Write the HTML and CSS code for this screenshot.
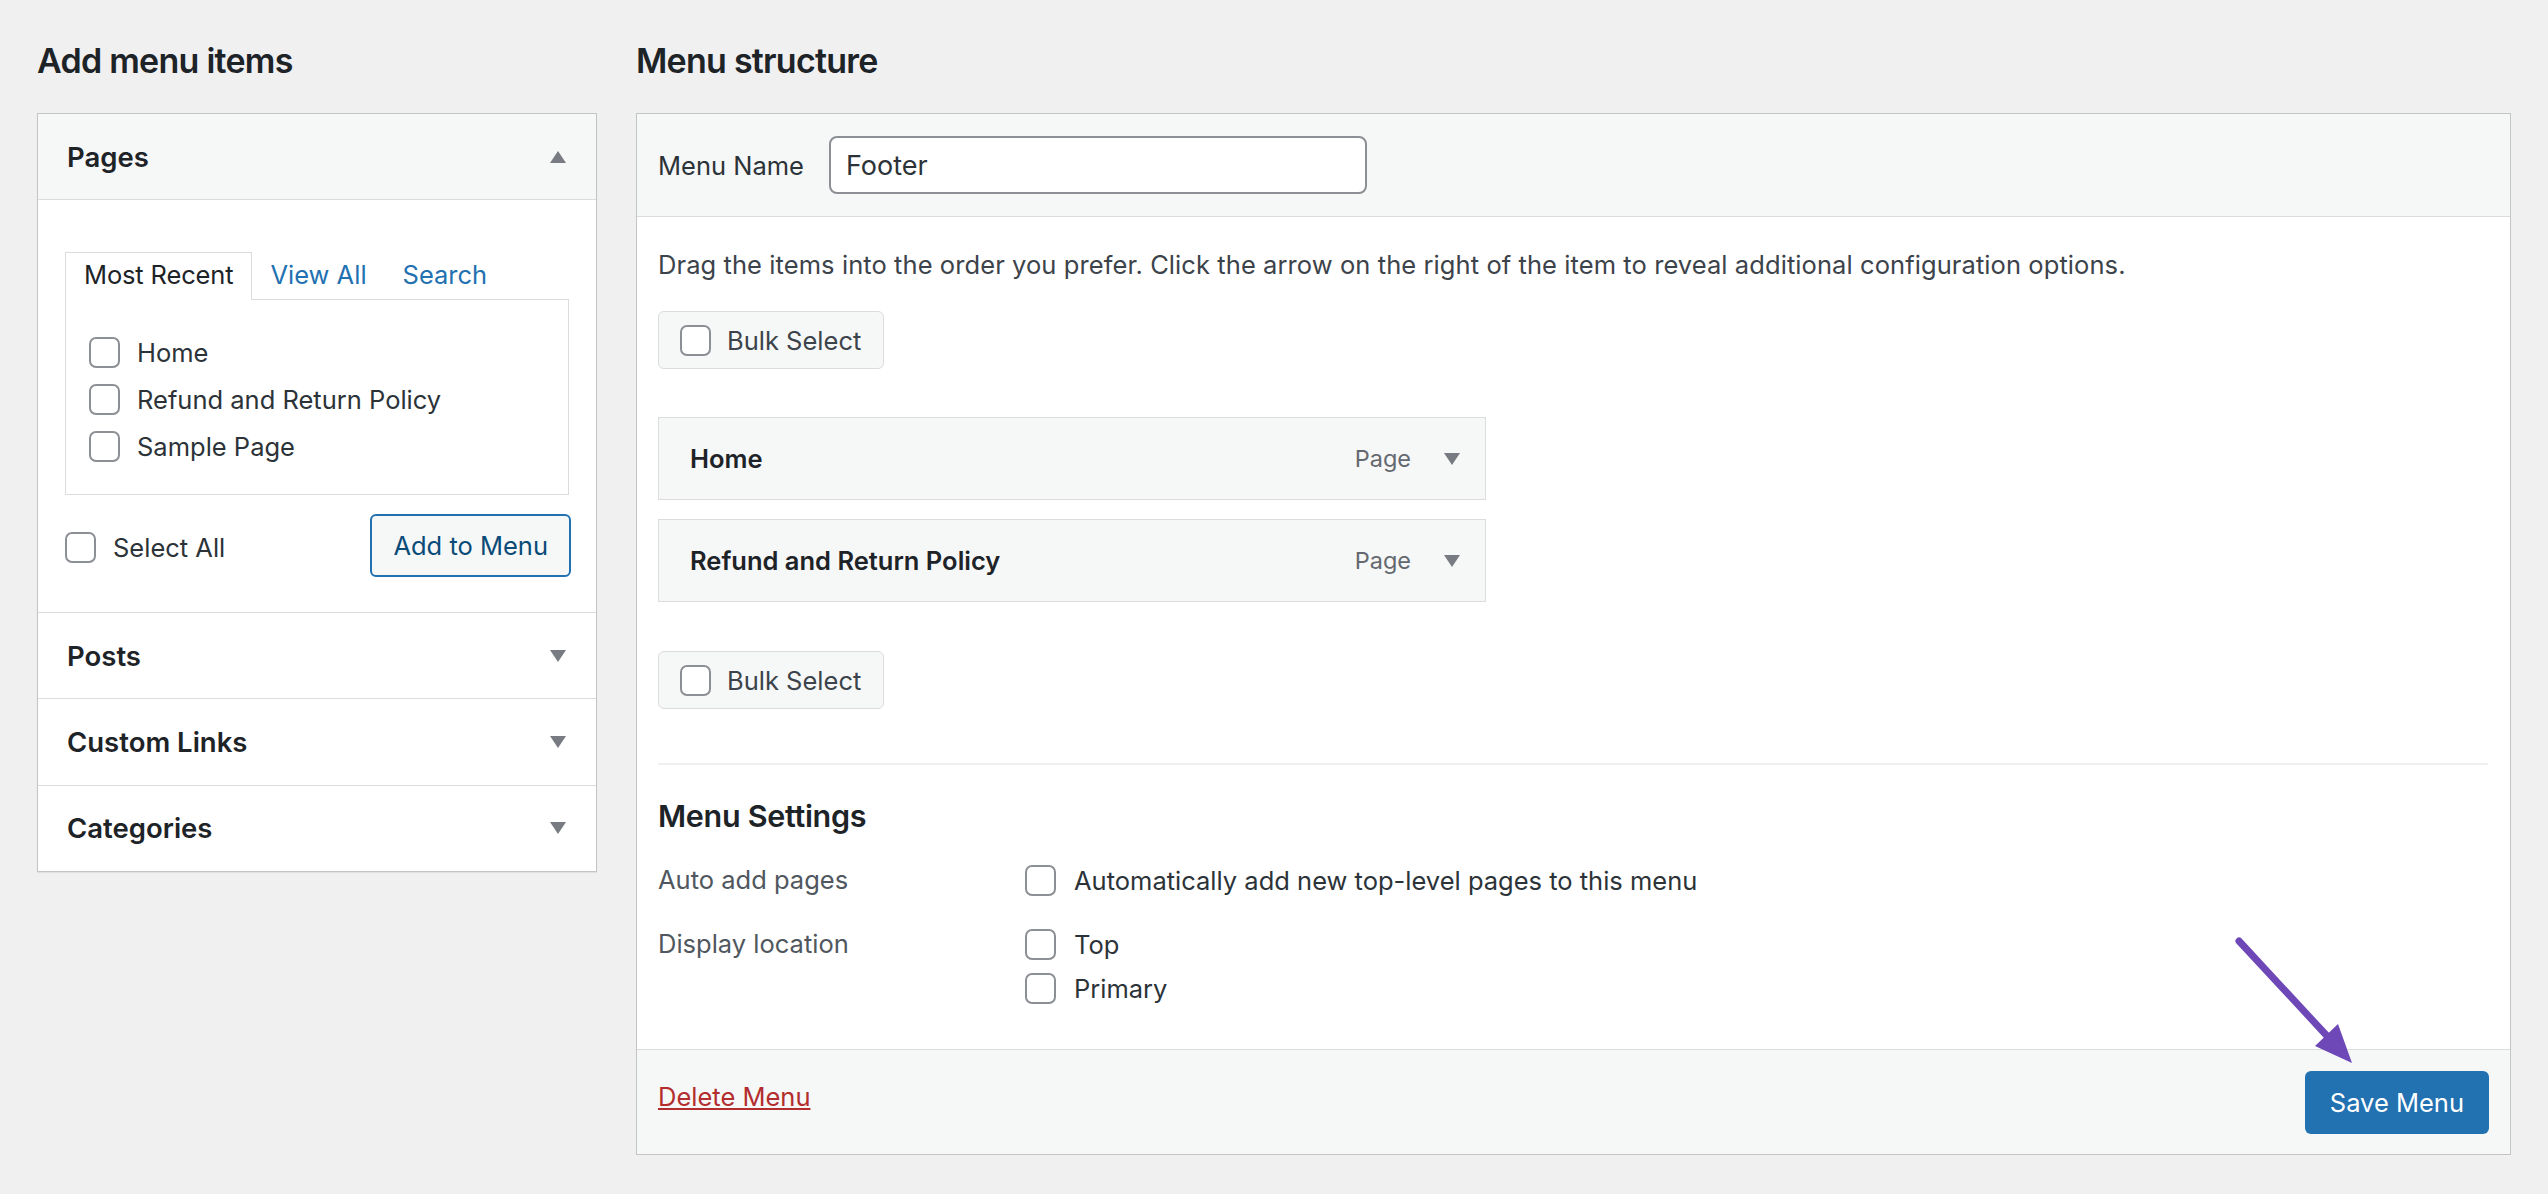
FILE: index.html
```html
<!DOCTYPE html>
<html>
<head>
<meta charset="utf-8">
<title>Menus</title>
<link rel="stylesheet" href="styles.css">
</head>
<body>
<div class="page">
  <div class="col-left">
    <h2 class="col-title">Add menu items</h2>
    <div class="accordion">
      <div class="acc-section open">
        <div class="acc-head"><h3>Pages</h3><span class="tri tri-up"></span></div>
        <div class="acc-content">
          <ul class="tabs">
            <li class="tab active">Most Recent</li>
            <li class="tab"><a class="tab-link">View All</a></li>
            <li class="tab"><a class="tab-link">Search</a></li>
          </ul>
          <div class="tab-panel">
            <label class="check-row"><span class="cb"></span>Home</label>
            <label class="check-row"><span class="cb"></span>Refund and Return Policy</label>
            <label class="check-row"><span class="cb"></span>Sample Page</label>
          </div>
          <div class="add-row">
            <label class="check-row select-all"><span class="cb"></span>Select All</label>
            <button class="btn-secondary">Add to Menu</button>
          </div>
        </div>
      </div>
      <div class="acc-section">
        <div class="acc-head"><h3>Posts</h3><span class="tri tri-down"></span></div>
      </div>
      <div class="acc-section">
        <div class="acc-head"><h3>Custom Links</h3><span class="tri tri-down"></span></div>
      </div>
      <div class="acc-section">
        <div class="acc-head"><h3>Categories</h3><span class="tri tri-down"></span></div>
      </div>
    </div>
  </div>

  <div class="col-right">
    <h2 class="col-title">Menu structure</h2>
    <div class="menu-box">
      <div class="menu-head">
        <label class="menu-name-label">Menu Name</label>
        <div class="text-input">Footer</div>
      </div>
      <div class="menu-body">
        <p class="instructions">Drag the items into the order you prefer. Click the arrow on the right of the item to reveal additional configuration options.</p>
        <div class="bulk-btn bulk-top"><span class="cb"></span>Bulk Select</div>
        <ul class="menu-items">
          <li class="menu-item">
            <span class="item-title">Home</span>
            <span class="item-controls"><span class="item-type">Page</span><span class="tri tri-down"></span></span>
          </li>
          <li class="menu-item">
            <span class="item-title">Refund and Return Policy</span>
            <span class="item-controls"><span class="item-type">Page</span><span class="tri tri-down"></span></span>
          </li>
        </ul>
        <div class="bulk-btn bulk-bottom"><span class="cb"></span>Bulk Select</div>
        <div class="divider"></div>
        <h3 class="settings-title">Menu Settings</h3>
        <div class="settings-row auto-row">
          <div class="settings-label">Auto add pages</div>
          <div class="settings-options">
            <label class="option"><span class="cb"></span>Automatically add new top-level pages to this menu</label>
          </div>
        </div>
        <div class="settings-row location-row">
          <div class="settings-label">Display location</div>
          <div class="settings-options">
            <label class="option"><span class="cb"></span>Top</label>
            <label class="option"><span class="cb"></span>Primary</label>
          </div>
        </div>
      </div>
      <div class="menu-foot">
        <a class="delete-link">Delete Menu</a>
        <button class="btn-primary">Save Menu</button>
      </div>
    </div>
  </div>
</div>

<svg class="annot" width="150" height="150" viewBox="0 0 150 150" xmlns="http://www.w3.org/2000/svg">
  <line x1="19" y1="16" x2="108" y2="112" stroke="#6f48b7" stroke-width="7" stroke-linecap="round"/>
  <polygon points="95,121 118,99 132,138" fill="#6f48b7"/>
</svg>
</body>
</html>
```

FILE: styles.css
```css
* { box-sizing: border-box; }

body {
  margin: 0;
  background: #f0f0f1;
  font-family: Inter, "Noto Sans", sans-serif;
  color: #1d2327;
  font-size: 25.5px;
  position: relative;
  min-height: 1194px;
}

.page {
  display: flex;
  gap: 39px;
  padding: 41px 37px 0 37px;
  align-items: flex-start;
}

.col-left { width: 560px; flex: none; }
.col-right { flex: 1; min-width: 0; }

.col-title {
  margin: 0 0 32px;
  font-size: 34px;
  line-height: 40px;
  font-weight: 600;
  letter-spacing: -0.75px;
  color: #1d2327;
}

/* ---------- Left accordion ---------- */
.accordion {
  background: #fff;
  border: 1px solid #c3c4c7;
  box-shadow: 0 1px 1px rgba(0,0,0,0.06);
}

.acc-section + .acc-section { border-top: 1px solid #dcdcde; }

.acc-head {
  height: 85.4px;
  display: flex;
  align-items: center;
  justify-content: space-between;
  padding: 0 30px 0 29px;
}
.acc-head h3 {
  margin: 0;
  font-size: 27.5px;
  font-weight: 600;
  line-height: 40px;
}
.open .acc-head {
  height: 86px;
  background: #f6f7f7;
  border-bottom: 1px solid #dcdcde;
}

.tri {
  display: inline-block;
  width: 0;
  height: 0;
  border-left: 8px solid transparent;
  border-right: 8px solid transparent;
}
.tri-up { border-bottom: 12px solid #787c82; }
.tri-down { border-top: 12px solid #787c82; }

.acc-content { padding: 52px 25px 35px 27px; }

.tabs {
  list-style: none;
  margin: 0;
  padding: 0;
  display: flex;
}
.tab {
  border: 1px solid transparent;
  border-bottom: none;
  padding: 0 18px 3px;
  line-height: 44px;
  height: 48px;
  margin-bottom: -1px;
}
.tab.active {
  border-color: #dcdcde;
  background: #fff;
  position: relative;
  z-index: 1;
  color: #1d2327;
  letter-spacing: -0.15px;
}
.tab-link { color: #2271b1; text-decoration: none; }
.tab + .tab { padding: 0 17px 3px 17px; }

.tab-panel {
  border: 1px solid #dcdcde;
  padding: 29px 0 24px 23px;
  margin-right: 2px;
}

.check-row {
  display: flex;
  align-items: center;
  gap: 17px;
  height: 47px;
  color: #2c3338;
}

.cb {
  display: inline-block;
  flex: none;
  width: 31px;
  height: 31px;
  border: 2px solid #8c8f94;
  border-radius: 7px;
  background: #fff;
}

.add-row {
  margin-top: 19px;
  height: 63px;
  display: flex;
  align-items: center;
  justify-content: space-between;
}
.select-all { margin-top: 4px; }

.btn-secondary {
  height: 63px;
  padding: 0 21px;
  border: 2px solid #2271b1;
  border-radius: 6px;
  background: #f6f7f7;
  color: #0a4b78;
  font-family: inherit;
  font-size: 25.5px;
}

/* ---------- Right menu box ---------- */
.menu-box {
  background: #fff;
  border: 1px solid #c3c4c7;
}

.menu-head {
  height: 103px;
  background: #f6f7f7;
  border-bottom: 1px solid #dcdcde;
  display: flex;
  align-items: center;
  gap: 25px;
  padding: 0 21px;
}
.menu-name-label { color: #2c3338; }

.text-input {
  width: 538px;
  height: 58px;
  border: 2px solid #8c8f94;
  border-radius: 8px;
  background: #fff;
  padding: 0 15px;
  display: flex;
  align-items: center;
  font-size: 27px;
  color: #2c3338;
}

.menu-body { padding: 0 22px 39px 21px; }

.instructions {
  margin: 30px 0 0;
  line-height: 36px;
  color: #3c434a;
  letter-spacing: 0.08px;
}

.bulk-btn {
  display: inline-flex;
  align-items: center;
  gap: 16px;
  height: 58px;
  padding: 0 22px 0 21px;
  background: #f6f7f7;
  border: 1px solid #dcdcde;
  border-radius: 6px;
  color: #3c434a;
}
.bulk-top { margin-top: 28px; }
.bulk-bottom { margin-top: 49px; }

.menu-items {
  list-style: none;
  margin: 48px 0 0;
  padding: 0;
  width: 828px;
  display: flex;
  flex-direction: column;
  gap: 19px;
}
.menu-item {
  height: 83px;
  background: #f6f7f7;
  border: 1px solid #dcdcde;
  display: flex;
  align-items: center;
  justify-content: space-between;
  padding: 0 25px 0 31px;
}
.item-title { font-weight: 600; color: #1d2327; }
.item-controls { display: flex; align-items: center; gap: 33px; }
.item-type { font-size: 23.5px; color: #646970; }

.divider {
  margin-top: 54px;
  height: 2px;
  background: #f0f0f1;
}

.settings-title {
  margin: 31px 0 0;
  font-size: 30.5px;
  line-height: 40px;
  font-weight: 600;
  letter-spacing: -0.3px;
}

.settings-row { display: flex; }
.auto-row { margin-top: 22px; }
.location-row { margin-top: 20px; }
.settings-label {
  width: 367px;
  flex: none;
  height: 44px;
  line-height: 44px;
  color: #50575e;
}
.settings-options { display: flex; flex-direction: column; }
.option {
  display: flex;
  align-items: center;
  gap: 18px;
  height: 44px;
  color: #2c3338;
}

.menu-foot {
  height: 105px;
  background: #f6f7f7;
  border-top: 1px solid #dcdcde;
  display: flex;
  align-items: center;
  justify-content: space-between;
  padding: 0 21px;
}
.delete-link {
  color: #b32d2e;
  text-decoration: underline;
  margin-bottom: 11px;
}
.btn-primary {
  height: 63px;
  padding: 0 25px;
  border: none;
  border-radius: 6px;
  background: #2271b1;
  color: #fff;
  font-family: inherit;
  font-size: 25.5px;
}

/* ---------- Annotation arrow ---------- */
.annot {
  position: absolute;
  left: 2220px;
  top: 925px;
}
```
